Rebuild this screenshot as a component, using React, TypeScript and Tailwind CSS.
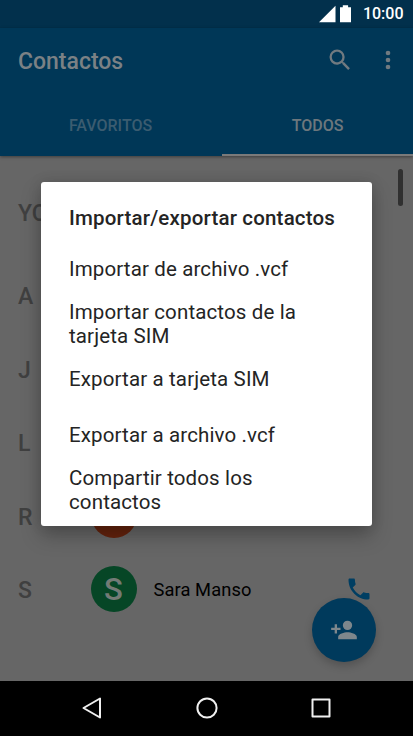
import React from "react";

const sections = ["A", "J", "L", "R", "S"];

const options = [
  { lines: ["Importar de archivo .vcf"], box: "h-[55px]" },
  { lines: ["Importar contactos de la", "tarjeta SIM"], box: "h-[55px]" },
  { lines: ["Exportar a tarjeta SIM"], box: "h-[56px]" },
  { lines: ["Exportar a archivo .vcf"], box: "h-[55px]" },
  { lines: ["Compartir todos los", "contactos"], box: "h-[56px]" },
];

function StatusBar() {
  return (
    <div className="flex h-7 items-center justify-end bg-[#02304c] pr-[9.500px] text-white">
      <svg width="36" height="20" viewBox="0 0 36 20" className="mr-[11px]">
        <path d="M3 18.3 19.5 1.8v16.5z" fill="currentColor" />
        <path d="M24 3.2h2.8V1.2h5.3v2H35v15.1H24z" fill="currentColor" />
      </svg>
      <span className="text-[16px] leading-7 font-medium">10:00</span>
    </div>
  );
}

function Header() {
  return (
    <header className="relative z-10 flex h-32 flex-col bg-[#003757] shadow-[0_1px_3px_rgba(0,0,0,0.4)]">
      <div className="flex h-[68px] items-center pl-[18px] text-[#7b8185]">
        <h1 className="grow text-[23px] leading-7 font-medium">Contactos</h1>
        <svg width="28" height="28" viewBox="0 0 24 24" fill="currentColor" className="mt-[-4px] mr-5 text-[#717a80]">
          <path d="M15.5 14h-.79l-.28-.27A6.471 6.471 0 0 0 16 9.5 6.5 6.5 0 1 0 9.5 16c1.61 0 3.09-.59 4.23-1.57l.27.28v.79l5 4.99L20.490 19l-4.99-5zm-6 0C7.010 14 5 11.990 5 9.500S7.010 5 9.500 5 14 7.010 14 9.500 11.990 14 9.500 14z" />
        </svg>
        <svg width="28" height="28" viewBox="0 0 24 24" fill="currentColor" className="mt-[-4px] mr-[11px] text-[#717a80]">
          <circle cx="12" cy="6" r="2" />
          <circle cx="12" cy="12" r="2" />
          <circle cx="12" cy="18" r="2" />
        </svg>
      </div>
      <nav className="flex h-[60px] text-[16px] font-medium">
        <div className="flex w-[221px] items-center justify-center text-[#3b5c70]">FAVORITOS</div>
        <div className="ml-px flex grow items-center justify-center border-b-2 border-[#7a7a7a] pt-[2px] text-[#6d777d]">TODOS</div>
      </nav>
    </header>
  );
}

function Contacts() {
  return (
    <main className="relative flex h-[525px] flex-col overflow-hidden bg-[#666]">
      <div className="flex h-[104.500px] shrink-0 items-center pt-[12px] pl-[18px] text-[23px] font-medium text-[#404040]">YO</div>
      {sections.map((letter) => (
        <div key={letter} className="flex h-[73.500px] shrink-0 items-center">
          <span className="w-[90.500px] shrink-0 pl-[18px] text-[23px] font-medium text-[#404040]">{letter}</span>
          {letter === "R" && <span className="-mt-[5px] h-[46px] w-[46px] rounded-full bg-[#65230d]" />}
          {letter === "S" && (
            <>
              <span className="-mt-[5px] flex h-[46px] w-[46px] items-center justify-center rounded-full bg-[#064626] pt-px text-[31px] leading-none font-medium text-[#737b76]">S</span>
              <span className="-mt-[3px] ml-[17px] grow text-[18.300px] tracking-[0.1px] text-black">Sara Manso</span>
              <svg width="28" height="28" viewBox="0 0 24 24" fill="#003e62" className="-mt-[5px] mr-10">
                <path d="M6.62 10.79c1.440 2.830 3.760 5.140 6.590 6.590l2.200-2.200c.27-.27.67-.36 1.020-.24 1.120.37 2.330.57 3.570.57.55 0 1 .45 1 1V20c0 .55-.45 1-1 1C10.610 21 3 13.390 3 4c0-.55.45-1 1-1h3.500c.55 0 1 .45 1 1 0 1.250.2 2.450.57 3.570.11.35.03.74-.25 1.020z" />
              </svg>
            </>
          )}
        </div>
      ))}
      <div className="absolute top-[13px] right-[10px] h-[37px] w-[5px] rounded-sm bg-[#303030]" />
      <div className="absolute top-[442px] left-[312px] flex h-16 w-16 items-center justify-center rounded-full bg-[#003a5c] shadow-[0_4px_8px_rgba(0,0,0,0.2)]">
        <svg width="28" height="28" viewBox="0 0 24 24" fill="#7e878c">
          <path d="M15 12a4 4 0 1 0 0-8 4 4 0 0 0 0 8zm-9-2V7H4v3H1v2h3v3h2v-3h3v-2zm9 4c-2.670 0-8 1.340-8 4v2h16v-2c0-2.660-5.330-4-8-4z" />
        </svg>
      </div>
    </main>
  );
}

function NavigationBar() {
  return (
    <footer className="flex h-[55px] items-center justify-between bg-black px-[80px] pb-px">
      <svg width="24" height="26" viewBox="0 0 24 26" fill="none" stroke="#f0f0f0" strokeWidth="2" strokeLinejoin="round"><path d="M20 3.500v19L3.500 13z" /></svg>
      <svg width="24" height="26" viewBox="0 0 24 26" fill="none" stroke="#f0f0f0" strokeWidth="2"><circle cx="12" cy="13" r="9.600" /></svg>
      <svg width="24" height="26" viewBox="0 0 24 26" fill="none" stroke="#f0f0f0" strokeWidth="2" strokeLinejoin="round"><path d="M3.500 4.500h17v17h-17z" /></svg>
    </footer>
  );
}

function ImportExportDialog() {
  return (
    <section role="dialog" className="absolute top-[182px] left-[41px] z-20 h-[343.500px] w-[331px] rounded-[3px] bg-white pl-7 text-[#242424] shadow-[0_10px_20px_rgba(0,0,0,0.25),0_0_14px_rgba(0,0,0,0.12)]">
      <h2 className="h-[59px] pt-6 text-[20.500px] leading-6 font-medium tracking-[0.180px] whitespace-nowrap">Importar/exportar contactos</h2>
      <ul>
        {options.map((option) => (
          <li key={option.lines[0]} className={"flex flex-col justify-center text-[20.500px] leading-6 tracking-[0.130px] whitespace-nowrap " + option.box}>
            {option.lines.map((line) => <span key={line}>{line}</span>)}
          </li>
        ))}
      </ul>
    </section>
  );
}

export default function App() {
  return (
    <div className="relative h-[736px] w-[413px] overflow-hidden bg-black font-['Roboto',sans-serif]">
      <StatusBar />
      <Header />
      <Contacts />
      <NavigationBar />
      <ImportExportDialog />
    </div>
  );
}
